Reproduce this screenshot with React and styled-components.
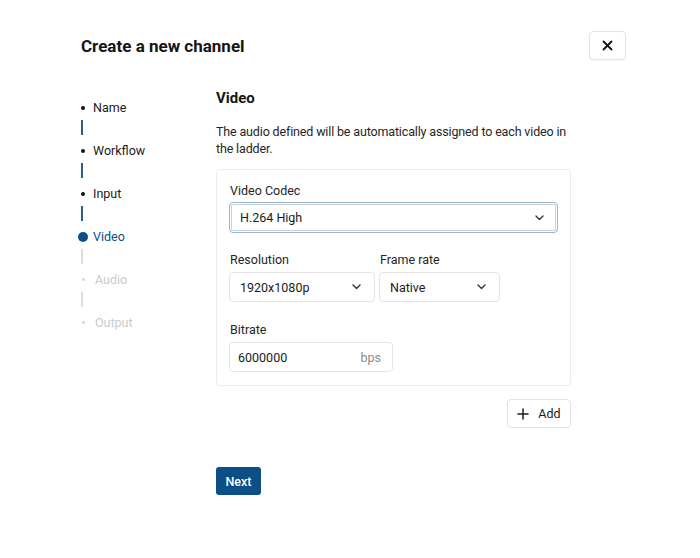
import React from "react";
import styled, { createGlobalStyle } from "styled-components";

const Global = createGlobalStyle`
  html, body { margin: 0; padding: 0; background: #fff; }
  body { font-family: Roboto, "Noto Sans", sans-serif; color: #1b1b1b; -webkit-font-smoothing: antialiased; }
  * { box-sizing: border-box; }
`;

const Page = styled.div`
  width: 700px;
  height: 558px;
  padding: 31px 74px 0 81px;
`;

const Header = styled.header`
  display: flex;
  justify-content: space-between;
  align-items: center;
  height: 29px;
`;

const Title = styled.h1`
  margin: 0;
  font-size: 17px;
  font-weight: 700;
  color: #161616;
`;

const IconButton = styled.button`
  width: 37px;
  height: 29px;
  display: flex;
  align-items: center;
  justify-content: center;
  background: #fff;
  border: 1px solid #e2e2e2;
  border-radius: 4px;
  padding: 0;
  color: #111;
  box-shadow: 0 1px 1px rgba(0,0,0,0.03);
`;

const Body = styled.div`
  display: flex;
  margin-top: 28px;
  margin-left: -3px;
`;

const Steps = styled.ol`
  list-style: none;
  margin: 0;
  padding: 11px 0 0 0;
  width: 138px;
  flex: none;
`;

const Step = styled.li`
  display: flex;
  flex-direction: column;
`;

const StepRow = styled.div`
  display: flex;
  align-items: center;
  height: 17px;
  font-size: 12.5px;
  color: ${p => p.$state === "active" ? "#0b4f86" : p.$state === "todo" ? "#c9cbce" : "#1b1b1b"};
`;

const Marker = styled.span`
  width: 10px;
  height: 10px;
  flex: none;
  display: flex;
  align-items: center;
  justify-content: center;
  margin-right: ${p => p.$state === "todo" ? "7px" : "5px"};
  &::before {
    content: "";
    display: block;
    border-radius: 50%;
    width: ${p => p.$state === "active" ? "10px" : p.$state === "todo" ? "3px" : "4px"};
    height: ${p => p.$state === "active" ? "10px" : p.$state === "todo" ? "3px" : "4px"};
    background: ${p => p.$state === "active" ? "#0b4f86" : p.$state === "todo" ? "#d3d5d8" : "#111"};
  }
`;

const Connector = styled.span`
  display: block;
  width: 2px;
  height: 15px;
  margin: 4px 0 7px 3px;
  background: ${p => p.$done ? "#2c5f88" : "#dcdde0"};
`;

const Main = styled.main`
  width: 355px;
  flex: none;
  display: flex;
  flex-direction: column;
`;

const SectionTitle = styled.h2`
  margin: 0;
  font-size: 15px;
  line-height: 20px;
  font-weight: 700;
  color: #161616;
`;

const Lead = styled.p`
  margin: 15px 0 0;
  font-size: 12.5px;
  letter-spacing: -0.15px;
  line-height: 17px;
  color: #262626;
`;

const Card = styled.section`
  margin-top: 12px;
  border: 1px solid #ececec;
  border-radius: 4px;
  padding: 13px 12px 13px 12px;
  display: flex;
  flex-direction: column;
`;

const Field = styled.div`
  display: flex;
  flex-direction: column;
  gap: ${p => p.$tight ? "3px" : "4px"};
  width: ${p => p.$w ? p.$w + "px" : "auto"};
`;

const FieldRow = styled.div`
  display: flex;
  gap: 4px;
  margin-top: ${p => p.$mt || 0}px;
`;

const Label = styled.label`
  font-size: 12.5px;
  line-height: 16px;
  padding-left: 1px;
  color: #262626;
`;

const SelectBox = styled.div`
  height: ${p => p.$focus ? "31px" : "30px"};
  display: flex;
  align-items: center;
  justify-content: space-between;
  padding: 0 13px 0 10px;
  border: 1px solid ${p => p.$focus ? "#9fb6c9" : "#e4e4e4"};
  border-radius: 4px;
  font-size: 12.5px;
  color: #1b1b1b;
  background: #fff;
  box-shadow: ${p => p.$focus ? "inset 0 0 0 1px #fff, inset 0 0 0 2px #c3d2de" : "none"};
`;

const InputBox = styled.div`
  height: 30px;
  display: flex;
  align-items: center;
  justify-content: space-between;
  padding: 0 11px 0 8px;
  border: 1px solid #e4e4e4;
  border-radius: 4px;
  font-size: 12.5px;
  color: #1b1b1b;
`;

const Unit = styled.span`
  color: #8b8b8b;
`;

const Actions = styled.div`
  display: flex;
  justify-content: flex-end;
  margin-top: 13px;
`;

const SecondaryButton = styled.button`
  height: 29px;
  width: 64px;
  display: flex;
  align-items: center;
  justify-content: center;
  gap: 9px;
  padding: 0 0 0 0;
  background: #fff;
  border: 1px solid #e2e2e2;
  border-radius: 4px;
  font-family: inherit;
  font-size: 12.5px;
  color: #1b1b1b;
`;

const PrimaryButton = styled.button`
  margin-top: 39px;
  align-self: flex-start;
  height: 28px;
  width: 45px;
  padding: 0;
  background: #0b4f86;
  border: none;
  border-radius: 3px;
  color: #fff;
  font-family: inherit;
  font-size: 12.5px;
  font-weight: 500;
`;

const Chevron = () => (
  <svg width="9" height="6" viewBox="0 0 9 6" fill="none">
    <path d="M1 1l3.5 3.5L8 1" stroke="#333" strokeWidth="1.4" strokeLinecap="round" strokeLinejoin="round" />
  </svg>
);

const steps = [
  { name: "Name", state: "done" },
  { name: "Workflow", state: "done" },
  { name: "Input", state: "done" },
  { name: "Video", state: "active" },
  { name: "Audio", state: "todo" },
  { name: "Output", state: "todo" },
];

export default function App() {
  return (
    <Page>
      <Global />
      <Header>
        <Title>Create a new channel</Title>
        <IconButton aria-label="Close">
          <svg width="11" height="11" viewBox="0 0 11 11">
            <path d="M1.5 1.5l8 8M9.5 1.5l-8 8" stroke="#111" strokeWidth="1.8" strokeLinecap="round" />
          </svg>
        </IconButton>
      </Header>
      <Body>
        <Steps>
          {steps.map((s, i) => (
            <Step key={s.name}>
              <StepRow $state={s.state}>
                <Marker $state={s.state} />
                {s.name}
              </StepRow>
              {i < steps.length - 1 && <Connector $done={s.state === "done"} />}
            </Step>
          ))}
        </Steps>
        <Main>
          <SectionTitle>Video</SectionTitle>
          <Lead>The audio defined will be automatically assigned to each video in the ladder.</Lead>
          <Card>
            <Field $tight>
              <Label>Video Codec</Label>
              <SelectBox $focus>H.264 High<Chevron /></SelectBox>
            </Field>
            <FieldRow $mt={19}>
              <Field $w={146}>
                <Label>Resolution</Label>
                <SelectBox>1920x1080p<Chevron /></SelectBox>
              </Field>
              <Field $w={121}>
                <Label>Frame rate</Label>
                <SelectBox>Native<Chevron /></SelectBox>
              </Field>
            </FieldRow>
            <FieldRow $mt={20}>
              <Field $w={164}>
                <Label>Bitrate</Label>
                <InputBox>6000000<Unit>bps</Unit></InputBox>
              </Field>
            </FieldRow>
          </Card>
          <Actions>
            <SecondaryButton>
              <svg width="12" height="12" viewBox="0 0 12 12">
                <path d="M6 1v10M1 6h10" stroke="#1b1b1b" strokeWidth="1.5" strokeLinecap="round" />
              </svg>
              Add
            </SecondaryButton>
          </Actions>
          <PrimaryButton>Next</PrimaryButton>
        </Main>
      </Body>
    </Page>
  );
}
